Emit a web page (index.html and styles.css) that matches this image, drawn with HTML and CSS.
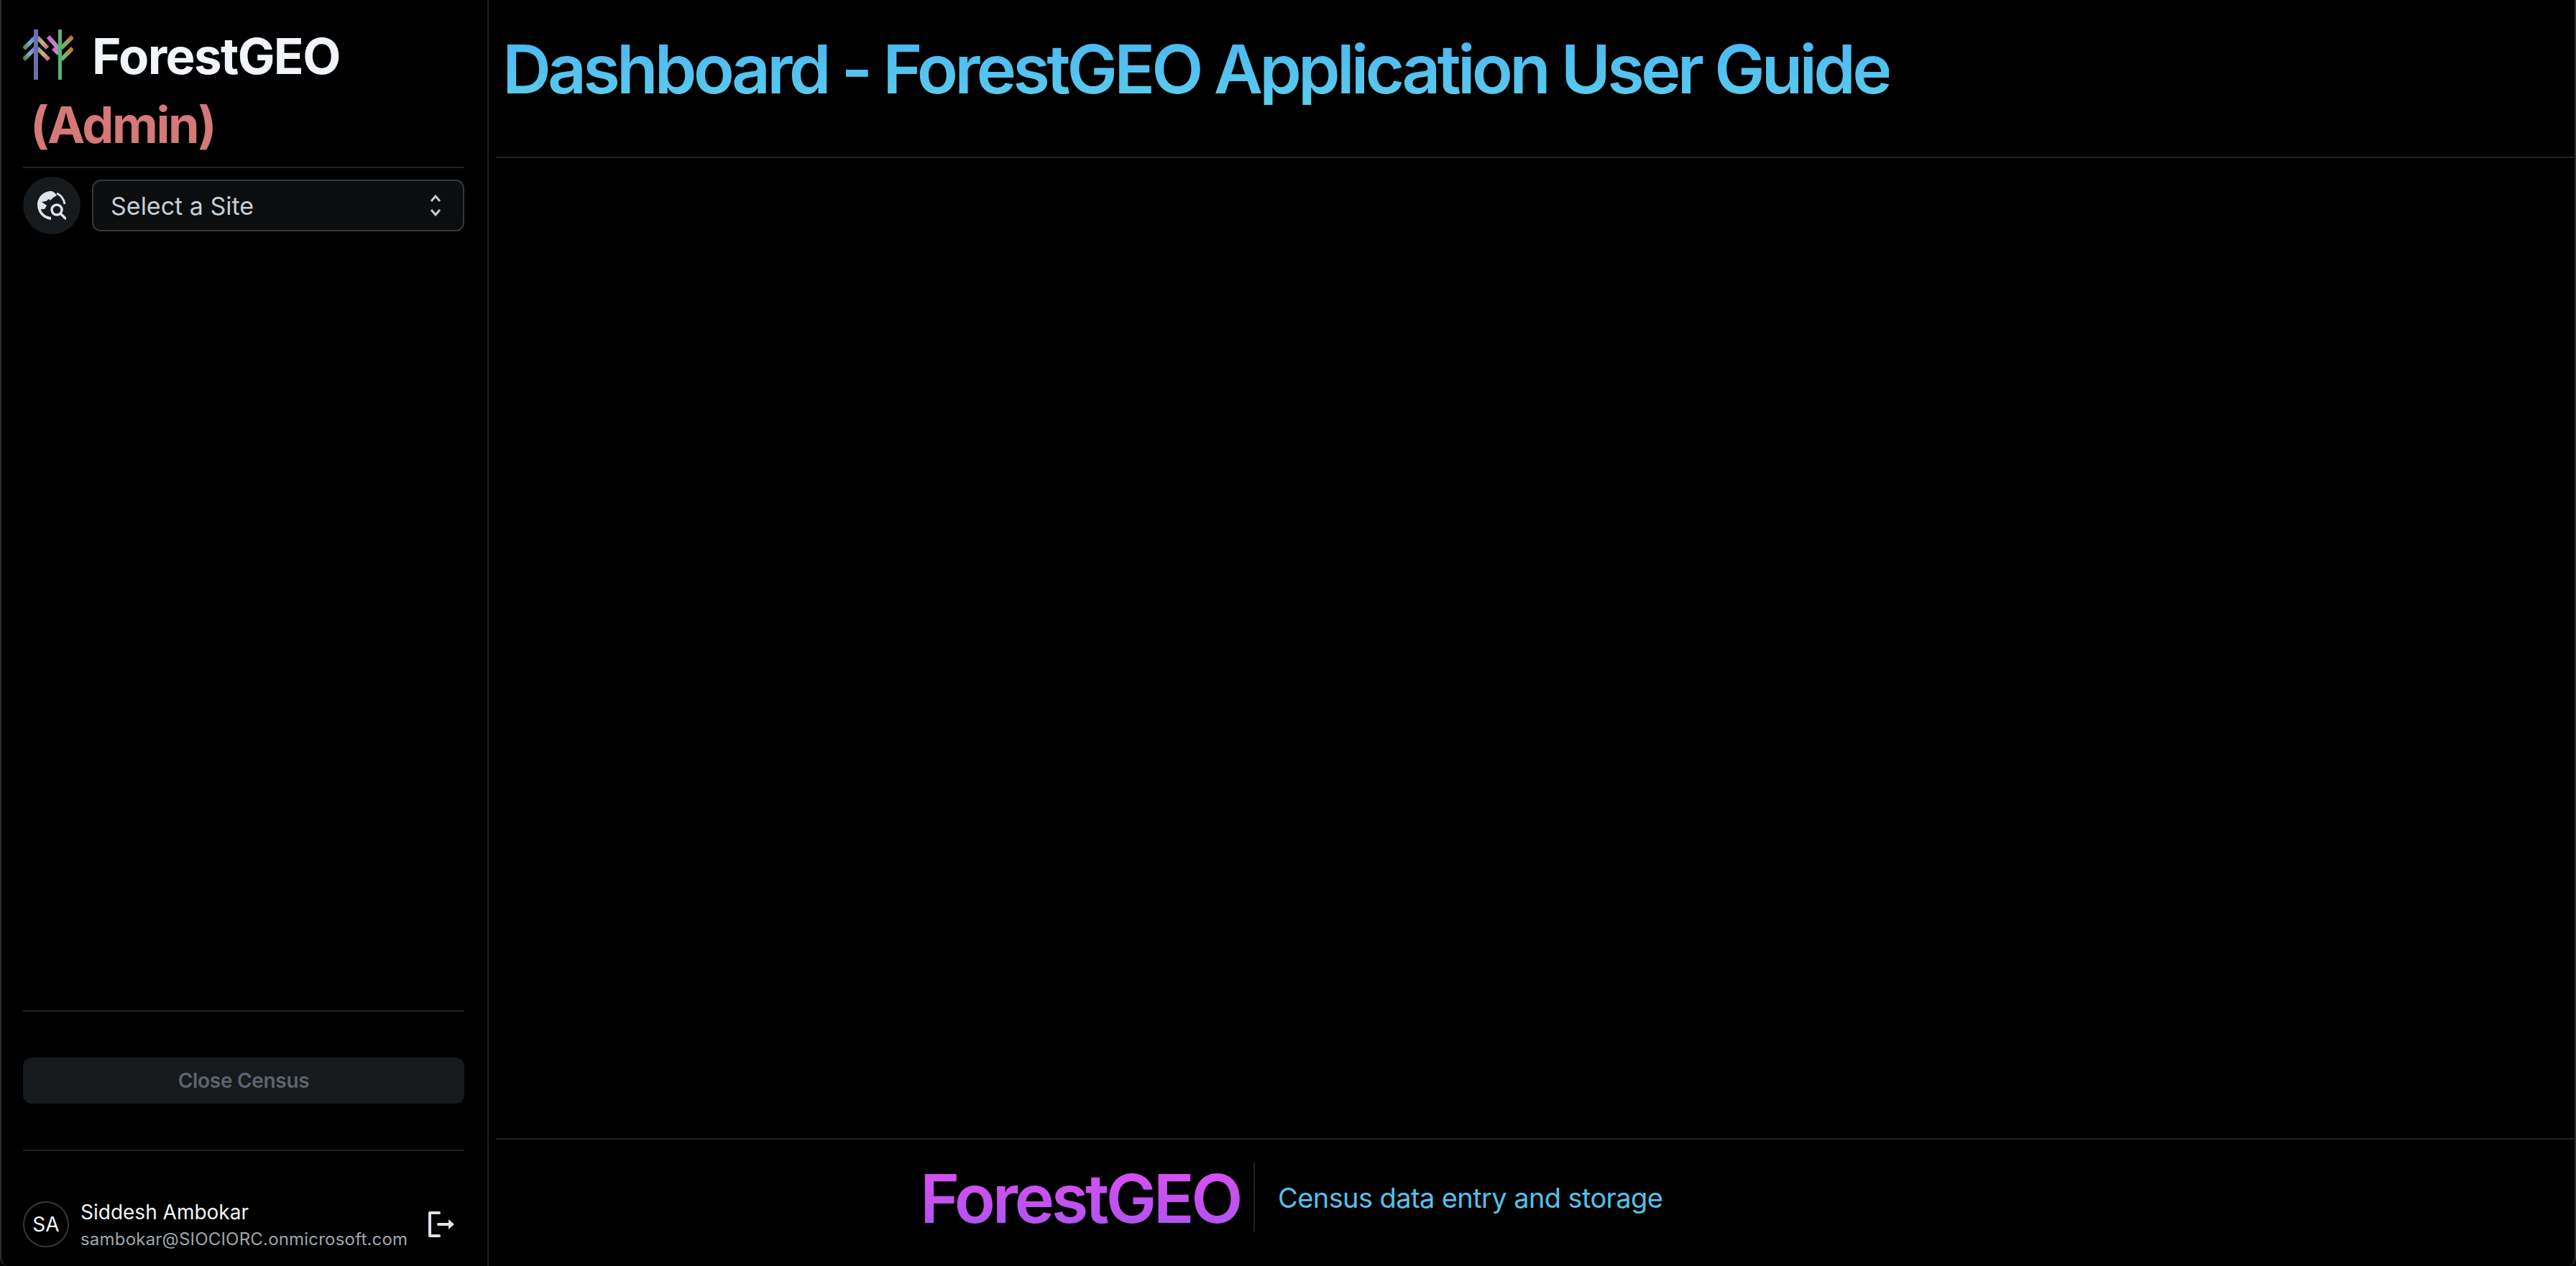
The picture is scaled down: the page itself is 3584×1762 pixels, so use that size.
FILE: index.html
```html
<!DOCTYPE html>
<html lang="en">
<head>
    <meta charset="UTF-8">
    <title>Dashboard - ForestGEO Application User Guide</title>
    <link rel="stylesheet" href="styles.css">
</head>
<body>
    <div class="app">
        <aside class="sidebar">
            <div class="brand_row">
                <svg class="tree_logo" width="70" height="70" viewBox="0 0 70 70" fill="none" stroke-width="6">
                    <defs>
                        <linearGradient id="branch_a" x1="0" y1="1" x2="1" y2="0">
                            <stop offset="0" stop-color="#5f7a3a"/>
                            <stop offset="0.5" stop-color="#6fb0c8"/>
                            <stop offset="1" stop-color="#7a76c0"/>
                        </linearGradient>
                        <linearGradient id="branch_b" x1="0" y1="0" x2="1" y2="1">
                            <stop offset="0" stop-color="#8f8fa8"/>
                            <stop offset="0.5" stop-color="#c8bc62"/>
                            <stop offset="1" stop-color="#d05fa8"/>
                        </linearGradient>
                        <linearGradient id="branch_c" x1="0" y1="0" x2="1" y2="1">
                            <stop offset="0" stop-color="#d65fd0"/>
                            <stop offset="0.6" stop-color="#c886c8"/>
                            <stop offset="1" stop-color="#6fb58a"/>
                        </linearGradient>
                        <linearGradient id="branch_d" x1="0" y1="1" x2="1" y2="0">
                            <stop offset="0" stop-color="#5fb878"/>
                            <stop offset="0.6" stop-color="#9aa24a"/>
                            <stop offset="1" stop-color="#d86a38"/>
                        </linearGradient>
                    </defs>
                    <path d="M1 27 L17 11" stroke="url(#branch_a)"/>
                    <path d="M1 42 L17 26" stroke="url(#branch_a)"/>
                    <path d="M20 11 L34 26" stroke="url(#branch_b)"/>
                    <path d="M20 26 L36 42" stroke="url(#branch_b)"/>
                    <path d="M35 10 L50 27" stroke="url(#branch_c)"/>
                    <path d="M42 26 L50 34" stroke="url(#branch_c)"/>
                    <path d="M69 10 L53 26" stroke="url(#branch_d)"/>
                    <path d="M69 26 L53 42" stroke="url(#branch_d)"/>
                    <rect x="15" y="0" width="6" height="70" fill="#6a70ac"/>
                    <rect x="49" y="0" width="5" height="70" fill="#55b374"/>
                </svg>
                <h2 class="brand_name">ForestGEO</h2>
            </div>
            <h2 class="admin_tag">(Admin)</h2>
            <hr class="divider">
            <div class="site_row">
                <div class="site_icon">
                    <svg width="40" height="40" viewBox="0 0 40 40" fill="none">
                        <path d="M19 0 C8 0 0 9 0 19 C0 30 8 39 19 40 L19 36 C12 35 6 31 5 25 L10 25 L13 20 L6 15 L12 14 L16 11 L18 13 L22 9 L27 6 C25 3 22 0 19 0 Z" fill="#dde3ea"/>
                        <path d="M27 3 C33 6 37 12 38 18" stroke="#dde3ea" stroke-width="3"/>
                        <circle cx="27" cy="26" r="7" stroke="#dde3ea" stroke-width="3.5"/>
                        <path d="M32 31 L39 38" stroke="#dde3ea" stroke-width="3.5" stroke-linecap="round"/>
                    </svg>
                </div>
                <div class="site_select">
                    <span>Select a Site</span>
                    <svg width="24" height="44" viewBox="0 0 24 44" fill="none" stroke="#c5ccd4" stroke-width="3">
                        <path d="M4 16 L10 9 L16 16"/>
                        <path d="M4 28 L10 35 L16 28"/>
                    </svg>
                </div>
            </div>
            <div class="sidebar_space"></div>
            <hr class="divider">
            <button class="close_census">Close Census</button>
            <hr class="divider">
            <div class="user_row">
                <div class="avatar">SA</div>
                <div class="user_info">
                    <div class="user_name">Siddesh Ambokar</div>
                    <div class="user_mail">sambokar@SIOCIORC.onmicrosoft.com</div>
                </div>
                <svg class="logout" width="36" height="36" viewBox="0 0 36 36" fill="none" stroke="#dde3ea" stroke-width="4" stroke-linecap="round" stroke-linejoin="round">
                    <path d="M15 2 L2 2 L2 34 L15 34"/>
                    <path d="M14 18 L29 18"/>
                    <path d="M28 11 L36 18 L28 25 Z" fill="#dde3ea" stroke="none"/>
                </svg>
            </div>
        </aside>
        <main class="content">
            <header class="page_header">
                <h1>Dashboard - ForestGEO Application User Guide</h1>
            </header>
            <div class="page_body"></div>
            <footer class="page_footer">
                <div class="footer_logo">ForestGEO</div>
                <div class="footer_sep"></div>
                <div class="footer_text">Census data entry and storage</div>
            </footer>
        </main>
    </div>
</body>
</html>
```
FILE: styles.css
```css
* {
    box-sizing: border-box;
}
html, body {
    margin: 0;
    height: 100%;
    background-color: #000;
}
body {
    font-family: Inter, "Liberation Sans", sans-serif;
}
.app {
    display: flex;
    height: 1762px;
    overflow: hidden;
    border-left: 2px solid #2a2c2f;
    border-right: 2px solid #2a2c2f;
    border-radius: 0 0 12px 12px;
}
.sidebar {
    display: flex;
    flex-direction: column;
    width: 678px;
    flex-shrink: 0;
    padding: 41px 32px 0 30px;
    border-right: 2px solid #1f2124;
}
.brand_row {
    display: flex;
    align-items: center;
    gap: 26px;
    height: 70px;
}
.tree_logo {
    flex-shrink: 0;
}
.brand_name {
    margin: 4px 0 0 0;
    font-size: 69px;
    line-height: 80px;
    font-weight: 700;
    letter-spacing: -1.6px;
    color: #f1f4f9;
}
.admin_tag {
    margin: 18px 0 13px 10px;
    font-size: 70px;
    line-height: 90px;
    font-weight: 700;
    letter-spacing: -2.4px;
    color: #d47878;
}
.divider {
    width: 614px;
    height: 2px;
    margin: 0;
    border: none;
    background-color: #1f2124;
    flex-shrink: 0;
}
.site_row {
    display: flex;
    align-items: center;
    gap: 16px;
    margin-top: 12px;
}
.site_icon {
    display: flex;
    align-items: center;
    justify-content: center;
    width: 80px;
    height: 80px;
    border-radius: 50%;
    background-color: #171a1c;
    flex-shrink: 0;
}
.site_select {
    display: flex;
    align-items: center;
    justify-content: space-between;
    width: 518px;
    height: 72px;
    padding: 0 24px;
    border: 2px solid #32383e;
    border-radius: 12px;
    background-color: #0b0d0e;
    color: #c7ced6;
    font-size: 34px;
}
.sidebar_space {
    flex: 1;
}
.close_census {
    display: block;
    width: 614px;
    height: 64px;
    margin: 64px 0;
    border: none;
    border-radius: 12px;
    background-color: #171a1c;
    color: #5d646c;
    font-family: inherit;
    font-size: 28px;
    font-weight: 600;
    letter-spacing: -0.3px;
}
.user_row {
    display: flex;
    align-items: center;
    width: 614px;
    height: 160px;
    padding: 70px 0 26px 0;
}
.avatar {
    display: flex;
    align-items: center;
    justify-content: center;
    width: 64px;
    height: 64px;
    border: 2px solid #32383e;
    border-radius: 50%;
    color: #f0f4f8;
    font-size: 28px;
    flex-shrink: 0;
}
.user_info {
    margin: 2px 0 0 16px;
    flex: 1;
    white-space: nowrap;
}
.user_name {
    color: #f0f4f8;
    font-size: 28px;
    line-height: 40px;
}
.user_mail {
    color: #9fa6ad;
    font-size: 24px;
    line-height: 36px;
    letter-spacing: 0.2px;
}
.logout {
    flex-shrink: 0;
    margin-right: 14px;
}
.content {
    display: flex;
    flex-direction: column;
    flex: 1;
    padding-left: 10px;
}
.page_header {
    height: 220px;
    border-bottom: 2px solid #1f2124;
    padding: 46px 0 0 9px;
}
.page_header h1 {
    display: inline-block;
    margin: 0;
    font-size: 94px;
    line-height: 100px;
    font-weight: 600;
    letter-spacing: -4.8px;
    background: linear-gradient(#4bb5f4, #5bcdea);
    -webkit-background-clip: text;
    background-clip: text;
    color: transparent;
}
.page_body {
    flex: 1;
}
.page_footer {
    display: flex;
    align-items: center;
    height: 178px;
    border-top: 2px solid #1f2124;
    padding: 0 0 16px 590px;
}
.footer_logo {
    margin-top: 4px;
    font-size: 94px;
    line-height: 100px;
    font-weight: 600;
    letter-spacing: -4.4px;
    background: linear-gradient(#e04ef0, #a855f0);
    -webkit-background-clip: text;
    background-clip: text;
    color: transparent;
}
.footer_sep {
    width: 2px;
    height: 96px;
    margin-left: 19px;
    background-color: #1f2124;
}
.footer_text {
    margin: 2px 0 0 32px;
    font-size: 38px;
    letter-spacing: -0.6px;
    color: #56c0ea;
}
```
